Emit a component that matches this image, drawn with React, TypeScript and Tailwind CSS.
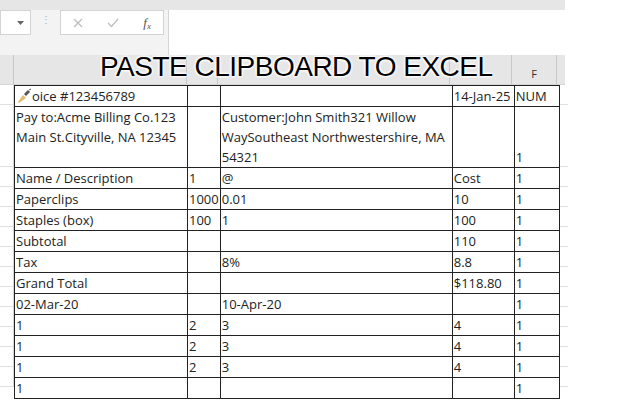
import React from "react";

const rows: { h: number; c: (string | null)[] }[] = [
  { h: 19, c: ["oice #123456789", "", "", "14-Jan-25", "NUM"] },
  { h: 61, c: ["Pay to:Acme Billing Co.123 Main St.Cityville, NA 12345", "", "Customer:John Smith321 Willow WaySoutheast Northwestershire, MA 54321", "", "1"] },
  { h: 19, c: ["Name / Description", "1", "@", "Cost", "1"] },
  { h: 19, c: ["Paperclips", "1000", "0.01", "10", "1"] },
  { h: 19, c: ["Staples (box)", "100", "1", "100", "1"] },
  { h: 19, c: ["Subtotal", "", "", "110", "1"] },
  { h: 19, c: ["Tax", "", "8%", "8.8", "1"] },
  { h: 19, c: ["Grand Total", "", "", "$118.80", "1"] },
  { h: 19, c: ["02-Mar-20", "", "10-Apr-20", "", "1"] },
  { h: 19, c: ["1", "2", "3", "4", "1"] },
  { h: 19, c: ["1", "2", "3", "4", "1"] },
  { h: 19, c: ["1", "2", "3", "4", "1"] },
  { h: 19, c: ["1", "", "", "", "1"] },
];
const widths = [173, 31, 232, 62, 45];

export default function App() {
  return (
    <div className="relative w-[640px] h-[400px] bg-white overflow-hidden text-[#222]" style={{ fontFamily: "'Open Sans', 'Liberation Sans', sans-serif" }}>
      <div className="w-[565px] h-[10px] bg-[#e6e6e6]" />
      <div className="flex w-[565px] h-[45px] bg-[#f3f3f3]">
        <div className="w-[31px] h-[25px] bg-white border border-[#d4d4d4] flex items-center justify-end pr-[6px]">
          <svg width="7" height="4" viewBox="0 0 7 4"><path d="M0 0h7L3.5 4z" fill="#666" /></svg>
        </div>
        <div className="w-[29px] flex justify-center pt-[7px] text-[#aaa] text-[10px] leading-[4px]">⋮</div>
        <div className="w-[104px] h-[25px] bg-white border border-[#d4d4d4] flex items-center justify-around">
          <svg width="10" height="10" viewBox="0 0 10 10"><path d="M1 1l8 8M9 1l-8 8" stroke="#bbb" strokeWidth="1.2" /></svg>
          <svg width="12" height="10" viewBox="0 0 12 10"><path d="M1 5l3.5 3.5L11 1" stroke="#bbb" strokeWidth="1.2" fill="none" /></svg>
          <span className="text-[13px] italic text-[#555]" style={{ fontFamily: "'Liberation Serif', serif" }}>f<sub className="text-[9px]">x</sub></span>
        </div>
        <div className="w-[4px]" />
        <div className="flex-1 h-[45px] bg-white border-l border-[#d4d4d4]" />
      </div>
      <div className="flex w-[565px] h-[30px] bg-[#e6e6e6] border-b border-[#d4d4d4]">
        <div className="w-[14px] border-r border-[#c8c8c8]" />
        {["", "", "", "", "F"].map((l, i) => (
          <div key={i} style={{ width: widths[i] }} className="border-r border-[#c8c8c8] flex items-end justify-center pb-[2px] text-[11px] text-[#333]">{l}</div>
        ))}
      </div>
      <div className="flex">
        <div className="w-[14px]">
          {rows.map((r, i) => <div key={i} style={{ height: r.h + 1 }} className="border-b border-[#e0e0e0] border-r border-r-[#d4d4d4]" />)}
        </div>
        <table className="border-collapse text-[13px] leading-[20px]" style={{ tableLayout: "fixed" }}>
          <colgroup>{widths.map((w, i) => <col key={i} style={{ width: w }} />)}</colgroup>
          <tbody>
            {rows.map((r, i) => (
              <tr key={i} style={{ height: r.h }}>
                {r.c.map((t, j) => (
                  <td key={j} className={`border border-[#222] px-[1px] py-0 overflow-hidden ${i === 1 ? (j === 4 ? "align-bottom" : "align-top") : "align-middle"}`}>
                    {i === 0 && j === 0 ? (
                      <span className="flex items-center">
                        <svg width="16" height="16" viewBox="0 0 16 16"><path d="M2 14l5-7 3 3-7 5z" fill="#e8b86b" /><path d="M8 6l4-4 2 2-4 4z" fill="#555" /><path d="M13 2l2-1" stroke="#555" /></svg>
                        <span>{t}</span>
                      </span>
                    ) : t}
                  </td>
                ))}
              </tr>
            ))}
          </tbody>
        </table>
        <div className="w-[8px]">
          {rows.map((r, i) => <div key={i} style={{ height: r.h + 1 }} className="border-b border-[#e0e0e0]" />)}
        </div>
      </div>
      <div className="absolute left-[100px] top-[50px] text-[28px] leading-[34px] text-black tracking-[-0.5px]" style={{ fontFamily: "'Liberation Sans', sans-serif", textShadow: "0 0 3px #fff, 0 0 3px #fff, 0 0 3px #fff, 0 0 3px #fff" }}>
        PASTE CLIPBOARD TO EXCEL
      </div>
    </div>
  );
}
